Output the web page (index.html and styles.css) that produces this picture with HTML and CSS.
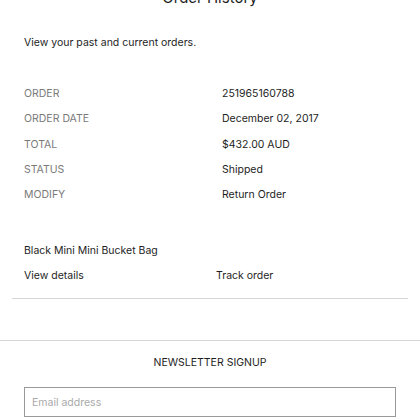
FILE: index.html
```html
<!DOCTYPE html>
<html>
<head>
<meta charset="utf-8">
<link rel="stylesheet" href="styles.css">
</head>
<body>
<div class="page">
  <h1 class="title">Order History</h1>
  <p class="intro">View your past and current orders.</p>
  <dl class="details">
    <dt>ORDER</dt><dd>251965160788</dd>
    <dt>ORDER DATE</dt><dd>December 02, 2017</dd>
    <dt>TOTAL</dt><dd>$432.00 AUD</dd>
    <dt>STATUS</dt><dd>Shipped</dd>
    <dt>MODIFY</dt><dd>Return Order</dd>
  </dl>
  <div class="item">
    <div class="item-name">Black Mini Mini Bucket Bag</div>
    <div class="item-links">
      <span class="link-left">View details</span>
      <span class="link-right">Track order</span>
    </div>
  </div>
</div>
<footer class="footer">
  <div class="news-title">NEWSLETTER SIGNUP</div>
  <div class="news-form">
    <input class="email" type="text" placeholder="Email address">
  </div>
</footer>
</body>
</html>
```
FILE: styles.css
```css
html, body {
  margin: 0;
  padding: 0;
  background: #fff;
}
body {
  font-family: Inter, "Liberation Sans", sans-serif;
  color: #1e1e1e;
  font-size: 10.5px;
}
.page {
  padding: 0 24px;
}
.title {
  margin: -12px 0 0;
  height: 20px;
  font-size: 15px;
  font-weight: 400;
  text-align: center;
  line-height: 20px;
}
.intro {
  margin: 27px 0 0;
  line-height: 16px;
}
.details {
  display: grid;
  grid-template-columns: 198px 1fr;
  row-gap: 9.3px;
  margin: 35px 0 0;
  line-height: 16px;
}
.details dt {
  color: #7a7a7a;
}
.details dd {
  margin: 0;
}
.item {
  margin: 40px -12px 0;
  padding: 0 12px 14px;
  border-bottom: 1px solid #d6d6d6;
}
.item-name {
  line-height: 16px;
}
.item-links {
  display: grid;
  grid-template-columns: 192px 1fr;
  margin-top: 9px;
  line-height: 16px;
}
.footer {
  margin-top: 41px;
  border-top: 1px solid #d6d6d6;
  padding: 14px 24px 0;
}
.news-title {
  text-align: center;
  line-height: 16px;
}
.news-form {
  margin-top: 16px;
}
.email {
  box-sizing: border-box;
  width: 100%;
  height: 30px;
  border: 1px solid #999;
  padding: 0 7px;
  font-family: Inter, "Liberation Sans", sans-serif;
  font-size: 10.5px;
  color: #1e1e1e;
  outline: none;
}
.email::placeholder {
  color: #aaa;
}
```
